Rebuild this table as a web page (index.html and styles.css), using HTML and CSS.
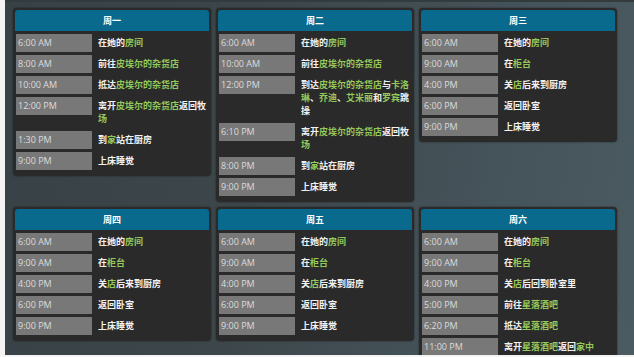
FILE: index.html
```html
<!DOCTYPE html>
<html lang="zh-CN">
<head>
<meta charset="utf-8">
<title>日程</title>
<link rel="stylesheet" href="styles.css">
</head>
<body>
<div class="page">
  <div class="grid">
    <section class="day">
      <div class="day-head">周一</div>
      <div class="row"><div class="time">6:00 AM</div><div class="act">在她的<span class="loc">房间</span></div></div>
      <div class="row"><div class="time">8:00 AM</div><div class="act">前往<span class="loc">皮埃尔的杂货店</span></div></div>
      <div class="row"><div class="time">10:00 AM</div><div class="act">抵达<span class="loc">皮埃尔的杂货店</span></div></div>
      <div class="row"><div class="time">12:00 PM</div><div class="act">离开<span class="loc">皮埃尔的杂货店</span>返回牧<span class="loc">场</span></div></div>
      <div class="row"><div class="time">1:30 PM</div><div class="act">到<span class="loc">家</span>站在厨房</div></div>
      <div class="row"><div class="time">9:00 PM</div><div class="act">上床睡觉</div></div>
    </section>
    <section class="day">
      <div class="day-head">周二</div>
      <div class="row"><div class="time">6:00 AM</div><div class="act">在她的<span class="loc">房间</span></div></div>
      <div class="row"><div class="time">10:00 AM</div><div class="act">前往<span class="loc">皮埃尔的杂货店</span></div></div>
      <div class="row"><div class="time">12:00 PM</div><div class="act">到达<span class="loc">皮埃尔的杂货店</span>与<span class="loc">卡洛琳</span>、<span class="loc">乔迪</span>、<span class="loc">艾米丽</span>和<span class="loc">罗宾</span>跳操</div></div>
      <div class="row"><div class="time">6:10 PM</div><div class="act">离开<span class="loc">皮埃尔的杂货店</span>返回牧<span class="loc">场</span></div></div>
      <div class="row"><div class="time">8:00 PM</div><div class="act">到<span class="loc">家</span>站在厨房</div></div>
      <div class="row"><div class="time">9:00 PM</div><div class="act">上床睡觉</div></div>
    </section>
    <section class="day">
      <div class="day-head">周三</div>
      <div class="row"><div class="time">6:00 AM</div><div class="act">在她的<span class="loc">房间</span></div></div>
      <div class="row"><div class="time">9:00 AM</div><div class="act">在<span class="loc">柜台</span></div></div>
      <div class="row"><div class="time">4:00 PM</div><div class="act">关<span class="loc">店</span>后来到厨房</div></div>
      <div class="row"><div class="time">6:00 PM</div><div class="act">返回卧室</div></div>
      <div class="row"><div class="time">9:00 PM</div><div class="act">上床睡觉</div></div>
    </section>
    <section class="day">
      <div class="day-head">周四</div>
      <div class="row"><div class="time">6:00 AM</div><div class="act">在她的<span class="loc">房间</span></div></div>
      <div class="row"><div class="time">9:00 AM</div><div class="act">在<span class="loc">柜台</span></div></div>
      <div class="row"><div class="time">4:00 PM</div><div class="act">关<span class="loc">店</span>后来到厨房</div></div>
      <div class="row"><div class="time">6:00 PM</div><div class="act">返回卧室</div></div>
      <div class="row"><div class="time">9:00 PM</div><div class="act">上床睡觉</div></div>
    </section>
    <section class="day">
      <div class="day-head">周五</div>
      <div class="row"><div class="time">6:00 AM</div><div class="act">在她的<span class="loc">房间</span></div></div>
      <div class="row"><div class="time">9:00 AM</div><div class="act">在<span class="loc">柜台</span></div></div>
      <div class="row"><div class="time">4:00 PM</div><div class="act">关<span class="loc">店</span>后来到厨房</div></div>
      <div class="row"><div class="time">6:00 PM</div><div class="act">返回卧室</div></div>
      <div class="row"><div class="time">9:00 PM</div><div class="act">上床睡觉</div></div>
    </section>
    <section class="day">
      <div class="day-head">周六</div>
      <div class="row"><div class="time">6:00 AM</div><div class="act">在她的<span class="loc">房间</span></div></div>
      <div class="row"><div class="time">9:00 AM</div><div class="act">在<span class="loc">柜台</span></div></div>
      <div class="row"><div class="time">4:00 PM</div><div class="act">关<span class="loc">店</span>后回到卧室里</div></div>
      <div class="row"><div class="time">5:00 PM</div><div class="act">前往<span class="loc">星落酒吧</span></div></div>
      <div class="row"><div class="time">6:20 PM</div><div class="act">抵达<span class="loc">星落酒吧</span></div></div>
      <div class="row"><div class="time">11:00 PM</div><div class="act">离开<span class="loc">星落酒吧</span>返回<span class="loc">家中</span></div></div>
    </section>
  </div>
</div>
</body>
</html>
```
FILE: styles.css
```css
html, body {
  margin: 0;
  padding: 0;
}
body {
  width: 634px;
  height: 357px;
  overflow: hidden;
  background: #f4f4f4;
}
.page {
  margin-left: 5px;
  height: 355px;
  overflow: hidden;
  box-sizing: border-box;
  padding: 6px 0 0 8px;
  background: linear-gradient(100deg, #384246 0%, #3d474b 40%, #45535a 75%, #4b5b62 100%);
  border-top: 2px solid #323b3e;
}
.grid {
  display: grid;
  grid-template-columns: repeat(3, 198px);
  column-gap: 5px;
  row-gap: 5px;
  align-items: start;
}
.day {
  background: #2a2a2a;
  border-radius: 4px;
  padding: 2px 2px 6px;
  display: flex;
  flex-direction: column;
  gap: 3px;
  box-shadow: 0 0 2px rgba(0, 0, 0, 0.55);
}
.day-head {
  background: #0a6a8e;
  height: 21px;
  text-align: center;
  color: #ffffff;
  font: 700 9px/21px "Noto Sans CJK SC", "Noto Sans", sans-serif;
  border-radius: 3px 3px 0 0;
}
.row {
  display: flex;
  align-items: flex-start;
  padding-left: 1px;
}
.time {
  flex: none;
  width: 76px;
  height: 18px;
  box-sizing: border-box;
  padding-left: 2px;
  background: #787878;
  color: #dcdcdc;
  font: 400 9px/18px "Open Sans", "Liberation Sans", sans-serif;
  white-space: nowrap;
}
.act {
  flex: 1;
  min-width: 0;
  margin-left: 6px;
  padding: 2px 0 3px;
  color: #f2f2f2;
  font: 700 9px/13px "Noto Sans CJK SC", "Noto Sans", sans-serif;
}
.loc {
  color: #96c95c;
}
```
